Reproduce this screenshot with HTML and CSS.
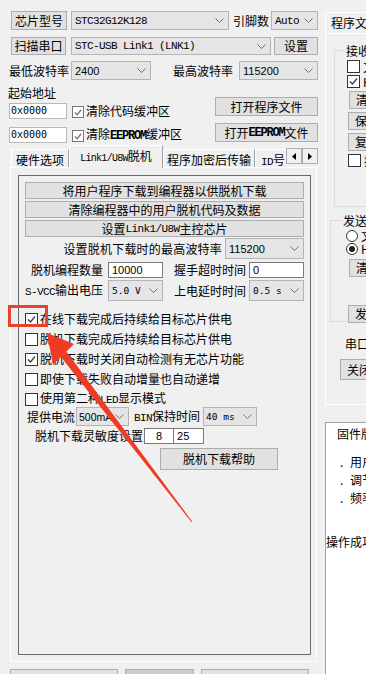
FILE: index.html
```html
<!DOCTYPE html>
<html lang="zh-CN">
<head>
<meta charset="utf-8">
<title>STC-ISP</title>
<link rel="stylesheet" href="styles.css">
</head>
<body>
<div class="app">
  <div class="left">
    <div class="row r1">
      <button class="btn b-chip">芯片型号</button>
      <div class="sel s-chip"><span class="m">STC32G12K128</span><svg class="dd" viewBox="0 0 9 5"><polyline points="0.5,0.5 4.5,4.5 8.5,0.5"/></svg></div>
      <span class="lab l-pin">引脚数</span>
      <div class="sel s-auto"><span class="m">Auto</span><svg class="dd" viewBox="0 0 9 5"><polyline points="0.5,0.5 4.5,4.5 8.5,0.5"/></svg></div>
    </div>
    <div class="row r2">
      <button class="btn b-scan">扫描串口</button>
      <div class="sel s-port"><span class="m">STC-USB Link1 (LNK1)</span><svg class="dd" viewBox="0 0 9 5"><polyline points="0.5,0.5 4.5,4.5 8.5,0.5"/></svg></div>
      <button class="btn b-set">设置</button>
    </div>
    <div class="row r3">
      <span class="lab l-min">最低波特率</span>
      <div class="sel s-min"><span class="n">2400</span><svg class="dd" viewBox="0 0 9 5"><polyline points="0.5,0.5 4.5,4.5 8.5,0.5"/></svg></div>
      <span class="lab l-max">最高波特率</span>
      <div class="sel s-max"><span class="n">115200</span><svg class="dd" viewBox="0 0 9 5"><polyline points="0.5,0.5 4.5,4.5 8.5,0.5"/></svg></div>
    </div>
    <div class="addr">
      <div class="addr-l">
        <div class="lab l-addr">起始地址</div>
        <div class="arow"><span class="inp hexin">0x0000</span><span class="cb on"><svg viewBox="0 0 11 11"><polyline points="2,5.5 4.5,8 9,2.5"/></svg></span><span class="ctext">清除代码缓冲区</span></div>
        <div class="arow a2"><span class="inp hexin">0x0000</span><span class="cb on"><svg viewBox="0 0 11 11"><polyline points="2,5.5 4.5,8 9,2.5"/></svg></span><span class="ctext">清除<span class="m b">EEPROM</span>缓冲区</span></div>
      </div>
      <div class="addr-r">
        <button class="btn fbtn">打开程序文件</button>
        <button class="btn fbtn f2">打开<span class="m b">EEPROM</span>文件</button>
      </div>
    </div>
    <div class="tabs">
      <div class="tab t1">硬件选项</div>
      <div class="tab tsel"><span class="m lk">Link1/U8W</span>脱机</div>
      <div class="tab t3">程序加密后传输</div>
      <div class="tab t4"><span class="m">ID</span>号</div>
      <div class="tarrows">
        <span class="tarr"><svg viewBox="0 0 4 7"><polygon points="4,0 0,3.5 4,7"/></svg></span>
        <span class="tarr"><svg viewBox="0 0 4 7"><polygon points="0,0 4,3.5 0,7"/></svg></span>
      </div>
    </div>
    <div class="panel">
      <div class="frame">
        <button class="btn fb">将用户程序下载到编程器以供脱机下载</button>
        <button class="btn fb">清除编程器中的用户脱机代码及数据</button>
        <button class="btn fb">设置<span class="m">Link1/U8W</span>主控芯片</button>
        <div class="frow f-baud">
          <span class="lab">设置脱机下载时的最高波特率</span>
          <div class="sel s-fb"><span class="n">115200</span><svg class="dd" viewBox="0 0 9 5"><polyline points="0.5,0.5 4.5,4.5 8.5,0.5"/></svg></div>
        </div>
        <div class="frow f-cnt">
          <span class="lab la">脱机编程数量</span>
          <span class="inp in55 n">10000</span>
          <span class="lab lb">握手超时时间</span>
          <span class="inp in55 n">0</span>
        </div>
        <div class="frow f-vcc">
          <span class="lab la"><span class="m">S-VCC</span>输出电压</span>
          <div class="sel s55"><span class="dm">5.0 V</span><svg class="dd" viewBox="0 0 9 5"><polyline points="0.5,0.5 4.5,4.5 8.5,0.5"/></svg></div>
          <span class="lab lb">上电延时时间</span>
          <div class="sel s55"><span class="dm">0.5 s</span><svg class="dd" viewBox="0 0 9 5"><polyline points="0.5,0.5 4.5,4.5 8.5,0.5"/></svg></div>
        </div>
        <div class="checks">
          <div class="crow"><span class="cb on"><svg viewBox="0 0 11 11"><polyline points="2,5.5 4.5,8 9,2.5"/></svg></span><span class="ctext">在线下载完成后持续给目标芯片供电</span></div>
          <div class="crow"><span class="cb"></span><span class="ctext">脱机下载完成后持续给目标芯片供电</span></div>
          <div class="crow"><span class="cb on"><svg viewBox="0 0 11 11"><polyline points="2,5.5 4.5,8 9,2.5"/></svg></span><span class="ctext">脱机下载时关闭自动检测有无芯片功能</span></div>
          <div class="crow"><span class="cb"></span><span class="ctext">即使下载失败自动增量也自动递增</span></div>
          <div class="crow"><span class="cb"></span><span class="ctext">使用第二种<span class="m">LED</span>显示模式</span></div>
        </div>
        <div class="frow f-cur">
          <span class="lab">提供电流</span>
          <div class="sel s-cur"><span class="n sm">500mA</span><svg class="dd" viewBox="0 0 9 5"><polyline points="0.5,0.5 4.5,4.5 8.5,0.5"/></svg></div>
          <span class="lab l-bin"><span class="m">BIN</span>保持时间</span>
          <div class="sel s-bin"><span class="dm">40 ms</span><svg class="dd" viewBox="0 0 9 5"><polyline points="0.5,0.5 4.5,4.5 8.5,0.5"/></svg></div>
        </div>
        <div class="frow f-sens">
          <span class="lab">脱机下载灵敏度设置</span>
          <span class="inp i8 n">8</span>
          <span class="inp i25 n">25</span>
        </div>
        <button class="btn help">脱机下载帮助</button>
      </div>
    </div>
    <div class="bottom">
      <button class="btn bb1">下载/编程</button>
      <button class="btn bb2">停止</button>
      <button class="btn bb3">重复编程</button>
    </div>
  </div>
  <div class="right">
    <div class="rin">
      <div class="rtab">程序文件</div>
      <div class="rpanel">
        <fieldset class="grp g1">
          <legend>接收缓冲区</legend>
          <div class="rcb first"><span class="cb"></span><span>文本模式</span></div>
          <div class="rcb"><span class="cb on"><svg viewBox="0 0 11 11"><polyline points="2,5.5 4.5,8 9,2.5"/></svg></span><span>HEX模式</span></div>
          <button class="btn rb r-clr">清空接收区</button>
          <button class="btn rb r-save">保存接收数据</button>
          <button class="btn rb r-copy">复制接收数据</button>
          <div class="rcb r-last"><span class="cb"></span><span>接收区显示时间</span></div>
        </fieldset>
        <fieldset class="grp g2">
          <legend>发送缓冲区</legend>
          <div class="rrad first"><span class="rd"></span><span>文本模式</span></div>
          <div class="rrad"><span class="rd on"></span><span>HEX模式</span></div>
          <button class="btn rb r-clr2">清空发送区</button>
          <button class="btn rb r-send">发送文件</button>
        </fieldset>
        <div class="rport">串口 COM3</div>
        <button class="btn rb r-close">关闭串口</button>
      </div>
      <div class="log">
        <div class="lg1">固件版本号: 7.4.7U</div>
        <div class="lg2"><span class="dot">.</span>用户设定频率: 35.000MHz</div>
        <div class="lg3"><span class="dot">.</span>调节后的频率: 35.006MHz</div>
        <div class="lg3"><span class="dot">.</span>频率调节误差: 0.017%</div>
        <div class="lg4">操作成功 !</div>
      </div>
    </div>
  </div>
</div>
<svg class="overlay" viewBox="0 0 366 674" width="366" height="674">
  <rect x="9.5" y="306.5" width="37" height="19" fill="none" stroke="#e8432d" stroke-width="3"/>
  <polygon points="47,333 53,365 74,344" fill="#ef3b26"/>
  <polygon points="60.4,356.3 66.6,351.7 192.4,521.7 191.6,522.3" fill="#ef3b26"/>
</svg>
</body>
</html>
```

FILE: styles.css
```css
* { box-sizing: border-box; margin: 0; padding: 0; }
html, body { width: 366px; height: 674px; overflow: hidden; }
body {
  background: #f0f0f0;
  font-family: "Noto Sans CJK SC", "Microsoft YaHei", sans-serif;
  font-size: 12px;
  line-height: 14px;
  color: #000;
  position: relative;
}
button { font: inherit; color: inherit; }

.app { display: flex; width: 366px; height: 674px; }
.left { width: 325px; flex: none; }
.right { flex: 1; overflow: hidden; }

/* generic controls */
.btn {
  display: flex; align-items: center; justify-content: center;
  background: #e1e1e1; border: 1px solid #adadad;
  white-space: nowrap; line-height: 14px;
}
.sel {
  display: flex; align-items: center; justify-content: space-between;
  background: #e5e5e5; border: 1px solid #b4b4b4;
  padding: 0 4px 0 3px; white-space: nowrap;
}
.dd { width: 9px; height: 5px; flex: none; }
.dd polyline { fill: none; stroke: #6f6f6f; stroke-width: 1; }
.inp {
  display: flex; align-items: center;
  background: #fff; border: 1px solid #7a7a7a; padding-left: 3px;
  white-space: nowrap;
}
.lab { white-space: nowrap; }
.m { font-family: "Liberation Mono", monospace; font-size: 11px; letter-spacing: -0.6px; }
.m.b { font-weight: bold; font-size: 12px; letter-spacing: -1.2px; }
.n { font-family: "Liberation Sans", Arial, sans-serif; font-size: 11px; }
.n.sm { font-size: 10.5px; }
.dm { font-family: "DejaVu Sans Mono", monospace; font-size: 9.5px; }

.cb {
  width: 13px; height: 13px; flex: none;
  border: 1px solid #333; background: #fff;
  display: flex; align-items: center; justify-content: center;
}
.cb svg { width: 11px; height: 11px; }
.cb polyline { fill: none; stroke: #444; stroke-width: 1.4; }

/* top rows */
.row { display: flex; align-items: stretch; }
.r1 { margin-top: 11px; height: 19px; padding-left: 11px; }
.b-chip { width: 56px; }
.s-chip { width: 158px; margin-left: 4px; }
.l-pin { margin-left: 4px; width: 36px; line-height: 19px; }
.s-auto { width: 47px; margin-left: 2px; }

.r2 { margin-top: 7px; height: 18px; padding-left: 11px; }
.b-scan { width: 55px; }
.s-port { width: 200px; margin-left: 5px; }
.b-set { width: 44px; margin-left: 3px; }

.r3 { margin-top: 6px; height: 19px; padding-left: 9px; }
.r3 .lab { line-height: 19px; width: 60px; }
.s-min { width: 80px; margin-left: 2px; }
.l-max { margin-left: 22px; }
.s-max { width: 79px; margin-left: 6px; }

/* address block */
.addr { display: flex; margin-top: 6px; height: 57px; }
.addr-l { padding-left: 8px; }
.l-addr { line-height: 14px; height: 15px; }
.arow { display: flex; align-items: center; margin-top: 2px; height: 16px; padding-left: 1px; }
.arow.a2 { margin-top: 8px; }
.hexin { width: 58px; height: 16px; border-color: #b9b9b9; font-family: "DejaVu Sans Mono", monospace; font-size: 10px; padding-left: 1px; }
.arow .cb { margin-left: 5px; margin-top: 2px; width: 12px; height: 12px; border-color: #777; }
.arow .cb polyline { stroke: #777; }
.arow .ctext { margin-left: 2px; }
.addr-r { margin-left: auto; margin-right: 7px; padding-top: 11px; display: flex; flex-direction: column; }
.fbtn { width: 103px; height: 19px; }
.fbtn.f2 { margin-top: 7px; }

/* tabs */
.tabs { display: flex; align-items: flex-end; height: 22px; margin-top: 2px; padding-left: 11px; position: relative; z-index: 1; }
.tab {
  height: 18px; padding-top: 3px; text-align: center; white-space: nowrap;
  border-top: 1px solid #fff; border-left: 1px solid #fff; border-right: 1px solid #a0a0a0;
  overflow: hidden;
}
.t1 { width: 58px; }
.tsel { width: 94px; height: 23px; margin-bottom: -1px; padding-top: 3px; background: #f0f0f0; }
.tsel .lk { font-size: 10px; letter-spacing: -0.7px; }
.t3 { width: 92px; }
.t4 { width: 31px; text-align: left; padding-left: 5px; border-right: none; }
.tarrows { display: flex; align-self: flex-start; margin-top: 3px; }
.tarr {
  width: 16px; height: 16px; border: 1px solid #adadad; background: #f0f0f0;
  display: flex; align-items: center; justify-content: center;
}
.tarr svg { width: 4px; height: 7px; }
.tarr polygon { fill: #000; }

/* panel */
.panel {
  margin-left: 10px; width: 307px; height: 495px;
  border: 1px solid #fff; padding: 7px 5px 6px 7px;
}
.frame {
  border: 1px solid #6a6a6a; height: 480px; padding: 6px 6px 0 6px;
}
.fb { width: 279px; height: 17px; }
.fb + .fb { margin-top: 2px; }
.frow { display: flex; align-items: center; }
.f-baud { justify-content: flex-end; margin-top: 1px; height: 21px; padding-right: 0; }
.f-baud .lab { letter-spacing: 0.2px; }
.s-fb { width: 79px; height: 21px; margin-left: 3px; }
.f-cnt { margin-top: 3px; height: 16px; margin-left: -6px; }
.la { width: 84px; text-align: right; }
.lb { width: 83px; text-align: right; }
.in55 { width: 55px; height: 16px; margin-left: 5px; margin-right: 0; }
.lb + .inp, .lb + .sel { margin-left: 3px; }
.f-vcc { margin-top: 2px; height: 21px; margin-left: -6px; }
.s55 { width: 55px; height: 21px; margin-left: 5px; }

.checks { margin-top: 8px; }
.crow { display: flex; align-items: center; height: 20px; }
.crow .ctext { margin-left: 2px; }

.f-cur { margin-top: -2px; height: 19px; padding-left: 2px; }
.s-cur { width: 53px; height: 19px; margin-left: 1px; padding-left: 2px; }
.l-bin { margin-left: 5px; }
.s-bin { width: 54px; height: 19px; margin-left: 3px; padding-left: 2px; }

.f-sens { margin-top: 2px; height: 16px; padding-left: 10px; }
.i8 { width: 30px; height: 16px; margin-left: 1px; justify-content: center; padding: 0; }
.i25 { width: 31px; height: 16px; margin-left: -1px; padding-left: 3px; }
.help { width: 118px; height: 22px; margin-left: 135px; margin-top: 4px; }

/* bottom buttons */
.bottom { display: flex; margin-top: 7px; padding-left: 10px; }
.bottom .btn { height: 22px; align-items: flex-start; padding-top: 3px; }
.bb1 { width: 108px; height: 30px; padding-top: 8px; }
.bb2 { width: 69px; margin-left: 7px; background: #cccccc; color: #6d6d6d; }
.bb3 { width: 108px; margin-left: 7px; }

/* right pane */
.rin { width: 220px; }
.rtab {
  margin-top: 12px; height: 21px; width: 80px; padding: 3px 0 0 5px;
  border-top: 1px solid #fff; border-left: 1px solid #fff; border-right: 1px solid #a0a0a0;
  white-space: nowrap;
}
.rpanel {
  border: 1px solid #fff; border-right: none; height: 372px; padding: 10px 0 0 8px;
}
.grp {
  border: 1px solid #dcdcdc; border-right: none; padding: 0 0 0 12px;
}
.grp legend { padding: 0 1px; margin-left: -2px; line-height: 13px; }
.g1 { height: 163px; }
.rcb { display: flex; align-items: center; height: 15px; white-space: nowrap; }
.rcb .cb { margin-right: 3px; }
.rcb.first { margin-top: 2px; }
.rb { width: 100px; height: 18px; justify-content: flex-start; padding-left: 6px; }
.r-clr { margin-top: 2px; margin-left: 2px; }
.r-save { margin-top: 3px; margin-left: 1px; }
.r-copy { margin-top: 3px; margin-left: 1px; }
.r-last { margin-top: 2px; margin-left: 1px; }
.g2 { height: 108px; margin-top: 7px; margin-left: -4px; padding-left: 6px; }
.g2 legend { margin-left: 5px; }
.rrad { display: flex; align-items: center; height: 13px; white-space: nowrap; margin-left: 9px; }
.rrad.first { margin-top: 2px; }
.rd {
  width: 12px; height: 12px; border: 1px solid #333; border-radius: 50%; background: #fff;
  margin-right: 3px; display: flex; align-items: center; justify-content: center; flex: none;
}
.rd.on::after { content: ""; width: 6px; height: 6px; border-radius: 50%; background: #222; }
.r-clr2 { margin-top: 4px; margin-left: 12px; }
.r-send { margin-top: 28px; margin-left: 11px; }
.rport { margin-top: 15px; padding-left: 11px; white-space: nowrap; }
.r-close { margin-top: 8px; margin-left: 6px; height: 21px; }

.log {
  margin-top: 17px; height: 253px; background: #fff;
  border-top: 1px solid #a0a0a0; border-left: 1px solid #a0a0a0;
  white-space: nowrap;
}
.lg1 { margin-top: 4px; padding-left: 11px; }
.lg2 { margin-top: 14px; padding-left: 14px; }
.lg3 { margin-top: 4px; padding-left: 14px; }
.dot { display: inline-block; width: 10px; }
.lg4 { margin-top: 30px; padding-left: 0; }

.overlay { position: absolute; left: 0; top: 0; pointer-events: none; }
```
